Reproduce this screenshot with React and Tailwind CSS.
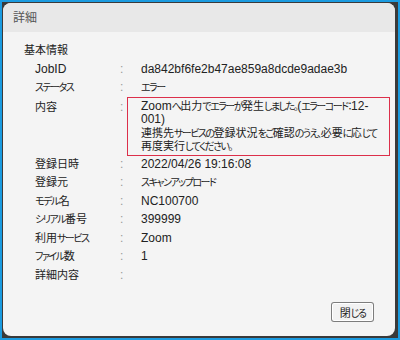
import React from "react";

const font = {
  fontFamily: '"Liberation Sans", "Noto Sans CJK JP", sans-serif',
  fontFeatureSettings: '"palt"',
};

// 漢字 11px、かな・記号は細く詰め、英数字は 12px（Meiryo UI 風の字幅に寄せる）
function J({ text }) {
  const out = [];
  const re = /([\u3000-\u303f\u3040-\u30ff\uff01-\uff20]+)|([\x20-\x7e]+)|([^\u3000-\u303f\u3040-\u30ff\uff01-\uff20\x20-\x7e]+)/g;
  let m;
  let i = 0;
  while ((m = re.exec(text))) {
    if (m[1]) {
      out.push(
        <span key={i++} className="text-[10px] tracking-[-1.5px]">
          {m[1]}
        </span>
      );
    } else if (m[2]) {
      out.push(
        <span key={i++} className="text-[12px]">
          {m[2]}
        </span>
      );
    } else {
      out.push(
        <span key={i++} className="text-[11px]">
          {m[3]}
        </span>
      );
    }
  }
  return out;
}

const rowsTop = [
  { label: "JobID", value: "da842bf6fe2b47ae859a8dcde9adae3b" },
  { label: "ステータス", value: "エラー" },
];

const rowsBottom = [
  { label: "登録日時", value: "2022/04/26 19:16:08" },
  { label: "登録元", value: "スキャンアップロード" },
  { label: "モデル名", value: "NC100700" },
  { label: "シリアル番号", value: "399999" },
  { label: "利用サービス", value: "Zoom" },
  { label: "ファイル数", value: "1" },
  { label: "詳細内容", value: "" },
];

function Row({ label, value }) {
  return (
    <div className="flex leading-[18.5px] h-[18.5px] text-[12px] text-[#222]">
      <div className="w-[85px]">
        <J text={label} />
      </div>
      <div className="w-[7px] text-[#999]">:</div>
      <div className="pl-[14px]">
        <J text={value} />
      </div>
    </div>
  );
}

export default function App() {
  return (
    <div className="w-[400px] h-[340px] bg-[#1b9be0] p-[2px]" style={font}>
      <div className="h-full bg-[#3a3a3a] pl-[1px] pt-[1px] pr-[3px] pb-[2px]">
        <div className="h-full rounded-[8px] bg-[#f4f4f4] flex flex-col overflow-hidden">
          {/* タイトル */}
          <div className="h-[29px] bg-[#e8e8e8] pl-[10px] flex items-center text-[12px] text-[#555]">
            詳細
          </div>

          {/* 本文 */}
          <div className="flex-1 flex flex-col pl-[21px] pt-[9px]">
            <div className="text-[12px] leading-[18.5px] text-[#222]">
              <J text="基本情報" />
            </div>
            <div className="pl-[11px]">
              {rowsTop.map((r, i) => (
                <Row key={i} {...r} />
              ))}

              {/* 内容（赤枠） */}
              <div className="flex text-[12px] text-[#222] mb-[-1px]">
                <div className="w-[85px] leading-[14px] pt-[3px]">
                  <J text="内容" />
                </div>
                <div className="w-[7px] leading-[14px] pt-[3px] text-[#999]">:</div>
                <div className="w-[263px] border border-[#dc2f4a] pl-[13px] pt-[2px] pb-[1px] leading-[13.6px] whitespace-nowrap">
                  <div>
                    <J text="Zoomへ出力でエラーが発生しました。(エラーコード：12-" />
                  </div>
                  <div>001)</div>
                  <div>
                    <J text="連携先サービスの登録状況をご確認のうえ、必要に応じて" />
                  </div>
                  <div>
                    <J text="再度実行してください。" />
                  </div>
                </div>
              </div>

              {rowsBottom.map((r, i) => (
                <Row key={i} {...r} />
              ))}
            </div>

            <div className="mt-auto self-end mr-[21px] mb-[12px]">
              <button className="w-[43px] h-[20px] rounded-[3px] bg-[#f2f2f2] shadow-[inset_0_0_0_1px_#7d7d7d,inset_0_0_0_2px_#ffffff] leading-none text-[#222]">
                <J text="閉じる" />
              </button>
            </div>
          </div>
        </div>
      </div>
    </div>
  );
}
